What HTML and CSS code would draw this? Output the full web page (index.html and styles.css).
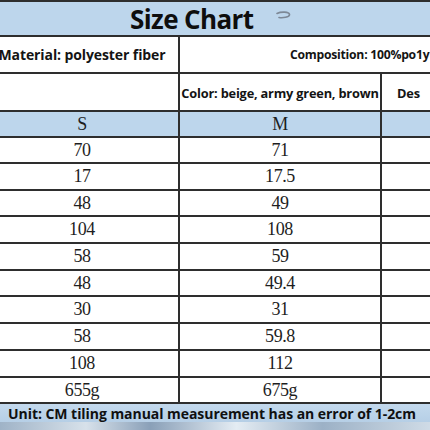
FILE: index.html
```html
<!DOCTYPE html>
<html>
<head>
<meta charset="utf-8">
<link rel="stylesheet" href="styles.css">
</head>
<body>
<div class="sheet">
  <div class="title-bar">
    <h1 class="title">Size Chart</h1>
    <svg class="mark" width="16" height="9" viewBox="0 0 16 9"><path d="M1 2.5 C5 0.5 13 0.5 13.5 3.5 C14 6.5 6 7 3 6.5" fill="none" stroke="#7d8896" stroke-width="1.6" stroke-linecap="round"/></svg>
  </div>
  <div class="row r-material">
    <div class="cell label">Material: polyester fiber</div>
    <div class="cell label span2 comp">Composition: 100%po1y</div>
  </div>
  <div class="row r-color">
    <div class="cell"></div>
    <div class="cell label small">Color: beige, army green, brown</div>
    <div class="cell label small desc">Des</div>
  </div>
  <div class="row r-size">
    <div class="cell num">S</div>
    <div class="cell num">M</div>
    <div class="cell num"></div>
  </div>
  <div class="row h26"><div class="cell num">70</div><div class="cell num">71</div><div class="cell"></div></div>
  <div class="row h27"><div class="cell num">17</div><div class="cell num">17.5</div><div class="cell"></div></div>
  <div class="row h26"><div class="cell num">48</div><div class="cell num">49</div><div class="cell"></div></div>
  <div class="row h27"><div class="cell num">104</div><div class="cell num">108</div><div class="cell"></div></div>
  <div class="row h27"><div class="cell num">58</div><div class="cell num">59</div><div class="cell"></div></div>
  <div class="row h26"><div class="cell num">48</div><div class="cell num">49.4</div><div class="cell"></div></div>
  <div class="row h27"><div class="cell num">30</div><div class="cell num">31</div><div class="cell"></div></div>
  <div class="row h27"><div class="cell num">58</div><div class="cell num">59.8</div><div class="cell"></div></div>
  <div class="row h27"><div class="cell num">108</div><div class="cell num">112</div><div class="cell"></div></div>
  <div class="row h26"><div class="cell num">655g</div><div class="cell num">675g</div><div class="cell"></div></div>
  <div class="footer">Unit: CM tiling manual measurement has an error of 1-2cm</div>
  <div class="strip"></div>
</div>
</body>
</html>
```

FILE: styles.css
```css
html, body {
  margin: 0;
  padding: 0;
  background: #ffffff;
}
body {
  width: 430px;
  height: 430px;
  overflow: hidden;
  color: #141414;
}
.sheet {
  width: 430px;
  display: flex;
  flex-direction: column;
}
.title-bar {
  box-sizing: border-box;
  height: 37px;
  border-top: 2px solid #2e2e2e;
  border-bottom: 2px solid #2e2e2e;
  background: #bdd6ec;
  display: flex;
  align-items: center;
  padding-left: 130px;
  gap: 22px;
}
.title {
  margin: 0;
  font-family: "Open Sans", sans-serif;
  font-weight: 700;
  font-size: 26px;
  line-height: 1;
  letter-spacing: -0.6px;
  color: #0e0e0e;
}
.mark {
  margin-top: -6px;
}
.row {
  box-sizing: border-box;
  display: grid;
  grid-template-columns: 194px 202px 48px;
  width: 444px;
  margin-left: -14px;
  border-bottom: 2px solid #2e2e2e;
}
.cell {
  box-sizing: border-box;
  border-right: 2px solid #2e2e2e;
  display: flex;
  align-items: center;
  justify-content: center;
  white-space: nowrap;
  overflow: hidden;
}
.cell:last-child {
  border-right: 0;
}
.span2 {
  grid-column: 2 / 4;
}
.label {
  font-family: "Open Sans", sans-serif;
  font-weight: 700;
  font-size: 14px;
  letter-spacing: -0.1px;
}
.small {
  font-size: 12.8px;
  letter-spacing: -0.2px;
}
.comp {
  justify-content: flex-start;
  padding-left: 110px;
  font-size: 12.2px;
  letter-spacing: -0.25px;
}
.desc {
  justify-content: flex-start;
  padding-left: 15px;
}
.r-material { height: 37px; }
.r-material .label { padding-bottom: 1px; }
.r-color { height: 38px; }
.r-color .label { padding-top: 1px; }
.r-size {
  height: 26px;
  background: #bdd6ec;
}
.h26 { height: 26px; }
.h27 { height: 27px; }
.num {
  font-family: "Liberation Serif", serif;
  font-size: 18px;
  letter-spacing: -0.4px;
  color: #1e1e1e;
}
.footer {
  height: 18px;
  background: linear-gradient(#c3d9ed, #b6cfe6);
  font-family: "Open Sans", sans-serif;
  font-weight: 700;
  font-size: 14px;
  line-height: 19px;
  letter-spacing: -0.05px;
  text-align: center;
  white-space: nowrap;
  padding-right: 6px;
  color: #101010;
}
.strip {
  height: 8px;
  background: linear-gradient(90deg, #9fb3c7 0%, #d7e1ea 20%, #8aa0b8 35%, #e4ecf3 55%, #9cb1c6 75%, #cfdbe6 100%);
}
```
